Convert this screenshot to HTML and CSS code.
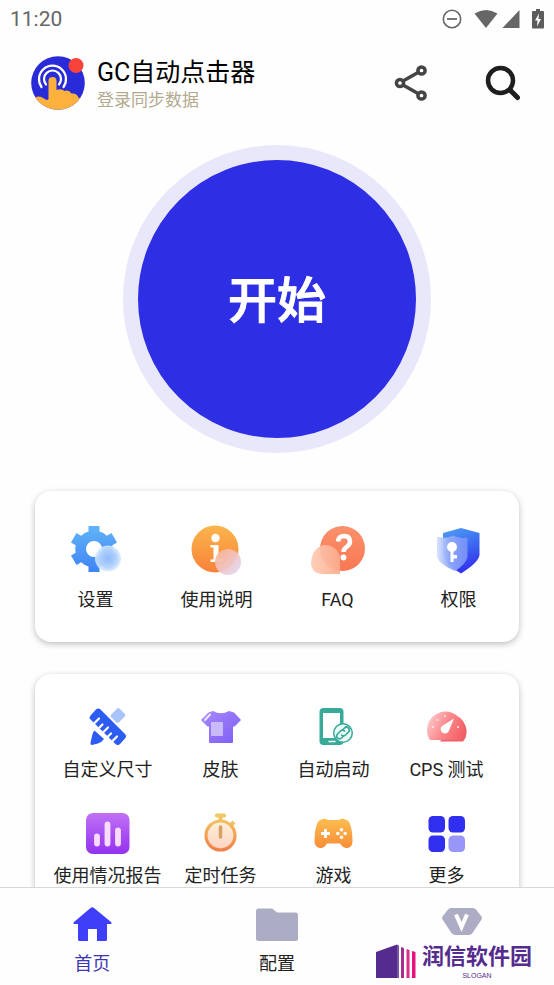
FILE: index.html
```
<!DOCTYPE html>
<html lang="zh-CN">
<head>
    <meta charset="UTF-8">
    <meta name="viewport" content="width=device-width, initial-scale=1.0">
    <title>GC自动点击器</title>
    <link rel="stylesheet" href="styles.css">
</head>
<body>
    <div class="status-bar">
        <span class="time">11:20</span>
        <div class="status-icons">
            <svg width="20" height="20" viewBox="0 0 20 20"><circle cx="10" cy="10" r="8.7" fill="none" stroke="#666" stroke-width="1.6"/><path d="M5 10h10" stroke="#666" stroke-width="1.8"/></svg>
            <svg class="wifi" width="24" height="20" viewBox="0 0 24 20"><path d="M0.5 4.5Q12 -2.500 23.500 4.500L12 19Z" fill="#666"/></svg>
            <svg class="signal" width="18" height="20" viewBox="0 0 18 20"><path d="M17.500 1v18H0.500Z" fill="#666"/></svg>
            <svg class="battery" width="12" height="20" viewBox="0 0 12 20"><path d="M4 0h4v2h3a1 1 0 0 1 1 1v15.500a1 1 0 0 1-1 1H1a1 1 0 0 1-1-1V3a1 1 0 0 1 1-1h3Z" fill="#5c5c5c"/><path d="M7 4.500L3 11.500h2.500L5 17.500l4-7.500H6.500Z" fill="#fff"/></svg>
        </div>
    </div>

    <main class="content">
        <header class="header">
            <svg class="avatar" width="54" height="54" viewBox="0 0 54 54">
                <defs><clipPath id="face"><circle cx="27" cy="27" r="26.800"/></clipPath></defs>
                <g clip-path="url(#face)">
                    <path d="M0 0h54v54H0Z" fill="#2a2bd8"/>
                    <g fill="none" stroke="#fff" stroke-width="2.200" stroke-linecap="round">
                        <path d="M10.500 31A13.500 13.500 0 1 1 32.500 31"/>
                        <path d="M15 28.500A8.500 8.500 0 1 1 28 28.500"/>
                    </g>
                    <path d="M0 44Q7 38 13 42.500Q16 45 17.500 43V25a4 4 0 0 1 8 0V34q5-2 8 1q4-2 7 2.500q6-.5 7 4.500Q52 41 54 44v12H0Z" fill="#fcb13c"/>
                </g>
                <circle cx="45" cy="9.500" r="7.500" fill="#f8433a"/>
            </svg>
            <div class="account">
                <h1>GC自动点击器</h1>
                <p>登录同步数据</p>
            </div>
            <button type="button" class="icon-button" aria-label="分享">
                <svg width="46" height="46" viewBox="0 0 46 46" fill="none" stroke="#444" stroke-width="3.500"><circle cx="12" cy="23" r="3.600"/><circle cx="33.500" cy="10.500" r="3.600"/><circle cx="33.500" cy="35.500" r="3.600"/><path d="M15 21l15-8.500M15 25l15 8.500"/></svg>
            </button>
            <button type="button" class="icon-button" aria-label="搜索">
                <svg width="46" height="46" viewBox="0 0 46 46" fill="none" stroke="#1e1e1e"><circle cx="20.500" cy="20.500" r="12.500" stroke-width="4.500"/><path d="M30 30l7.500 7.500" stroke-width="5" stroke-linecap="round"/></svg>
            </button>
        </header>

        <button type="button" class="start">开始</button>

        <section class="card card-main">
            <a href="#" class="tile">
                <svg width="56" height="56" viewBox="0 0 56 56">
                    <defs>
                        <linearGradient id="gear" x1="0" y1="5" x2="0" y2="51" gradientUnits="userSpaceOnUse"><stop offset="0" stop-color="#60b4f8"/><stop offset="1" stop-color="#3f83f4"/></linearGradient>
                        <radialGradient id="gearDrop"><stop offset="0" stop-color="#8fbcfb"/><stop offset=".7" stop-color="#b5d4fd" stop-opacity=".96"/><stop offset="1" stop-color="#d9ebff" stop-opacity=".85"/></radialGradient>
                    </defs>
                    <path d="M20.500 5h11v5.500q4 1 7.300 4.200l4.700-2.700 5.500 9.500-4.700 2.800q1 3.700 0 7.400l4.700 2.800-5.500 9.500-4.700-2.700q-3.300 3.200-7.300 4.200V51h-11v-5.500q-4-1-7.300-4.200L8.500 44 3 34.500l4.700-2.800q-1-3.700 0-7.400L3 21.500 8.500 12l4.700 2.700q3.300-3.200 7.300-4.200ZM26 20a8 8 0 1 0 0 16a8 8 0 0 0 0-16Z" fill="url(#gear)" fill-rule="evenodd"/>
                    <circle cx="40" cy="37.500" r="13" fill="url(#gearDrop)"/>
                </svg>
                <span>设置</span>
            </a>
            <a href="#" class="tile">
                <svg width="56" height="56" viewBox="0 0 56 56">
                    <defs>
                        <linearGradient id="info" x1="0" y1="0" x2="0" y2="1"><stop offset="0" stop-color="#fbb54b"/><stop offset="1" stop-color="#f9813a"/></linearGradient>
                        <linearGradient id="infoDrop" x1="0" y1="0" x2="1" y2="1"><stop offset="0" stop-color="#fbb08a"/><stop offset=".5" stop-color="#f0c5c5"/><stop offset="1" stop-color="#dfd8fb"/></linearGradient>
                    </defs>
                    <circle cx="26" cy="28" r="23.500" fill="url(#info)"/>
                    <circle cx="26.500" cy="17" r="4.200" fill="#fff"/>
                    <path d="M21.500 24h8v14.500h3V41h-11v-2.500h3v-12h-3Z" fill="#fff"/>
                    <circle cx="39" cy="41" r="13" fill="url(#infoDrop)" opacity=".93"/>
                </svg>
                <span>使用说明</span>
            </a>
            <a href="#" class="tile">
                <svg width="56" height="56" viewBox="0 0 56 56">
                    <defs>
                        <linearGradient id="faq" x1="0" y1="0" x2="0" y2="1"><stop offset="0" stop-color="#fa916c"/><stop offset="1" stop-color="#f87852"/></linearGradient>
                        <linearGradient id="faqDrop" x1="0" y1="0" x2="1" y2="0"><stop offset="0" stop-color="#fdcbb5"/><stop offset="1" stop-color="#fcaa8c"/></linearGradient>
                    </defs>
                    <circle cx="32.500" cy="27.500" r="22.500" fill="url(#faq)"/>
                    <path d="M14 24Q25 23 30 35V53H12Q1 52 1 42Q2 27 14 24Z" fill="url(#faqDrop)" opacity=".93"/>
                    <path d="M28 20.500q.5-5.500 6-5.500q6 .2 6 5.500q0 3-3.500 5.500q-3 2-3 5" fill="none" stroke="#fff" stroke-width="4.500"/>
                    <circle cx="33.500" cy="36.500" r="2.900" fill="#fff"/>
                </svg>
                <span>FAQ</span>
            </a>
            <a href="#" class="tile">
                <svg width="56" height="56" viewBox="0 0 56 56">
                    <defs>
                        <linearGradient id="shield" x1="0" y1="0" x2=".3" y2="1"><stop offset="0" stop-color="#4ea2f4"/><stop offset=".6" stop-color="#3b62f0"/><stop offset="1" stop-color="#3535ee"/></linearGradient>
                        <linearGradient id="shieldFront" x1="0" y1="0" x2="1" y2="0"><stop offset="0" stop-color="#d7e1ff"/><stop offset=".4" stop-color="#92aafa"/><stop offset="1" stop-color="#7690f6"/></linearGradient>
                    </defs>
                    <path d="M30 7l18.500 5v22Q48 41 30 52.500Q13 42 12 34V12Z" fill="url(#shield)"/>
                    <path d="M8 16Q15 18 22 14.500Q29 18 36.500 16.500V36Q35 43 24 50Q8 43 6 36V16Z" fill="url(#shieldFront)" opacity=".95"/>
                    <circle cx="21" cy="26" r="5" fill="#fff"/>
                    <path d="M19.500 29h3v5h3.500v3.500h-3.500V41h-3Z" fill="#fff"/>
                </svg>
                <span>权限</span>
            </a>
        </section>

        <section class="card card-tools">
            <a href="#" class="tile">
                <svg width="44" height="44" viewBox="0 0 44 44">
                    <rect x="26.500" y="4.500" width="11" height="12" rx="2" transform="rotate(45 32 10.500)" fill="#a9c3fb"/>
                    <path d="M8.500 25.500L18 34q-2 3-6 4.500l-6 1.500q-2 0-1.500-2L6 31q1-4 2.500-5.500Z" fill="#2d5cf0"/>
                    <path d="M10 4.500a3 3 0 0 1 4.500 0L39 29a3 3 0 0 1 0 4.500l-5 5.500a3 3 0 0 1-4.500 0L4.500 14.500a3 3 0 0 1 0-4Z" fill="#2d5cf0"/>
                    <path d="M8.500 18l4.500-4.500M13.500 22.500l3-3M17.500 27l4.500-4.500M22 31.500l3-3M26.500 36l4.500-4.500" stroke="#fff" stroke-width="2.200" stroke-linecap="round"/>
                </svg>
                <span>自定义尺寸</span>
            </a>
            <a href="#" class="tile">
                <svg width="44" height="44" viewBox="0 0 44 44">
                    <defs><linearGradient id="shirt" x1="0" y1="0" x2="1" y2="1"><stop offset="0" stop-color="#a78afb"/><stop offset="1" stop-color="#7d5cf4"/></linearGradient></defs>
                    <path d="M14 6q8 4.500 16 0l5 1.500L42 15l-6.500 6.500H34V37q0 1-1 1H11q-1 0-1-1V21.500H8.500L2 15 9.500 7.500Z" fill="url(#shirt)"/>
                    <path d="M6 15l5-5.500" stroke="#eee7ff" stroke-width="2" stroke-linecap="round"/>
                    <rect x="12" y="17" width="12" height="14" rx="1" fill="#c9bafc"/>
                </svg>
                <span>皮肤</span>
            </a>
            <a href="#" class="tile">
                <svg width="44" height="44" viewBox="0 0 44 44">
                    <rect x="7.500" y="3" width="24" height="37" rx="4" fill="#37aa99"/>
                    <rect x="11" y="8" width="17" height="25" fill="#fff"/>
                    <path d="M16.500 36.500h7" stroke="#fff" stroke-width="1.500"/>
                    <circle cx="31" cy="28" r="9.300" fill="#eafaf7" stroke="#37aa99" stroke-width="1.500"/>
                    <g fill="none" stroke="#37aa99" stroke-width="1.700" stroke-linecap="round"><path d="M30.500 25l2-2a2.800 2.800 0 0 1 4 4l-3 3a2.800 2.800 0 0 1-4 0"/><path d="M31.500 31l-2 2a2.800 2.800 0 0 1-4-4l3-3a2.800 2.800 0 0 1 4 0"/></g>
                </svg>
                <span>自动启动</span>
            </a>
            <a href="#" class="tile">
                <svg width="44" height="44" viewBox="0 0 44 44">
                    <defs><linearGradient id="gauge" x1="0" y1=".3" x2="1" y2=".7"><stop offset="0" stop-color="#fdc9c9"/><stop offset=".5" stop-color="#fa888b"/><stop offset="1" stop-color="#f46166"/></linearGradient></defs>
                    <path d="M15 36.500h23q4-4 3.500-12Q40 17 34 12Z" fill="#ee6067"/>
                    <path d="M5 35Q2 31 2 25A18.500 18.500 0 0 1 39 25Q39 31 35.500 35Z" fill="url(#gauge)"/>
                    <path d="M29 13.500L24 25.500a4.300 4.300 0 1 1-7-4.500Z" fill="#fff"/>
                    <g fill="#fee"><circle cx="8" cy="22" r="1"/><circle cx="12.500" cy="15" r="1"/><circle cx="20" cy="11" r="1"/><circle cx="33" cy="22" r="1"/></g>
                </svg>
                <span>CPS 测试</span>
            </a>
            <a href="#" class="tile">
                <svg width="44" height="44" viewBox="0 0 44 44">
                    <defs><linearGradient id="report" x1="0" y1="0" x2="0" y2="1"><stop offset="0" stop-color="#c070f7"/><stop offset="1" stop-color="#9332ee"/></linearGradient></defs>
                    <rect x="0" y="2" width="43.500" height="41" rx="7" fill="url(#report)"/>
                    <path d="M11 25.500v7M21.500 13.500v19M32 19.500v13" stroke="#f8dcff" stroke-width="5.800" stroke-linecap="round"/>
                </svg>
                <span>使用情况报告</span>
            </a>
            <a href="#" class="tile">
                <svg width="44" height="44" viewBox="0 0 44 44">
                    <defs><linearGradient id="timer" x1="0" y1="0" x2="0" y2="1"><stop offset="0" stop-color="#f4bf60"/><stop offset="1" stop-color="#ef8248"/></linearGradient><linearGradient id="dial" x1="0" y1="0" x2="0" y2="1"><stop offset="0" stop-color="#fff0da"/><stop offset="1" stop-color="#fcd3c1"/></linearGradient></defs>
                    <rect x="16" y="2.500" width="11" height="4" rx="1.500" fill="#f0c765"/>
                    <path d="M21.500 6v4M32 14l3-3" stroke="#f0c265" stroke-width="4"/>
                    <circle cx="21.500" cy="24.500" r="14.500" fill="url(#dial)" stroke="url(#timer)" stroke-width="3.200"/>
                    <path d="M21.500 16v10" stroke="#d6a163" stroke-width="3.500" stroke-linecap="round"/>
                </svg>
                <span>定时任务</span>
            </a>
            <a href="#" class="tile">
                <svg width="44" height="44" viewBox="0 0 44 44">
                    <defs><linearGradient id="pad" x1="0" y1="0" x2="0" y2="1"><stop offset="0" stop-color="#fcbd50"/><stop offset="1" stop-color="#f78d37"/></linearGradient></defs>
                    <path d="M11 8q3-1 5 1h11q2-2 5-1q5 1 6 5q2.500 7 2.500 17q0 6-5 7q-4 .5-7.500-4.500h-13Q12 37.500 8 37q-5.500-1-5.500-7Q2.500 20 5 13q1-4 6-5Z" fill="url(#pad)"/>
                    <path d="M13.500 18v9M9 22.500h9" stroke="#fff" stroke-width="2.800"/>
                    <g fill="#fff"><circle cx="29.500" cy="18.800" r="1.800"/><circle cx="29.500" cy="26.200" r="1.800"/><circle cx="25.800" cy="22.500" r="1.800"/><circle cx="33.200" cy="22.500" r="1.800"/></g>
                </svg>
                <span>游戏</span>
            </a>
            <a href="#" class="tile">
                <svg width="44" height="44" viewBox="0 0 44 44" fill="#302fef"><rect x="3.500" y="5" width="16.500" height="16.500" rx="4.500"/><rect x="23.500" y="5" width="16.500" height="16.500" rx="4.500"/><rect x="3.500" y="24.500" width="16.500" height="16.500" rx="4.500"/><rect x="23.500" y="24.500" width="16.500" height="16.500" rx="4.500" fill="#9996fa"/></svg>
                <span>更多</span>
            </a>
        </section>
    </main>

    <nav class="tab-bar">
        <a href="#" class="tab active">
            <svg width="44" height="40" viewBox="0 0 44 40"><path d="M20.500 3q1.700-1.500 3.500 0l17 14q1.500 1.800-.5 2H37v15.500q0 1.500-1.500 1.500H27V24h-9v12H9.500Q8 36 8 34.500V19H4.500q-2-.5-.5-2Z" fill="#3f3ffa"/></svg>
            <span>首页</span>
        </a>
        <a href="#" class="tab">
            <svg width="44" height="40" viewBox="0 0 44 40"><path d="M3.500 3.500H16q2 0 3.500 2L22 7.500h18.500q2.500 0 2.500 2.500v23.500q0 2.500-2.500 2.500h-37Q1 36 1 33.500V6q0-2.500 2.500-2.500Z" fill="#adacc5"/></svg>
            <span>配置</span>
        </a>
        <a href="#" class="tab" aria-label="VIP">
            <svg width="44" height="40" viewBox="0 0 44 40"><path d="M11 3h22q2 0 3 1.500l5.500 7q1 1.500 0 3L32.500 28q-1.500 2-3.500 2H15.500q-2.500 0-4-2L2.500 14.500q-1-1.500 0-3l5.500-7Q9 3 11 3Z" fill="#adacc5"/><path d="M16 9.500L21.500 22 27 9.500" fill="none" stroke="#fff" stroke-width="4"/></svg>
        </a>
        <div class="brand">
            <svg width="42" height="36" viewBox="0 0 42 36"><path d="M1 9L22 1.500V35H1Z" fill="#552b8e"/><path d="M22 1.500l2 1V35h-2Z" fill="#7b52a8"/><path d="M26 4l3 1v30h-3Z" fill="#a3308f"/><path d="M31.500 6l3 1v28h-3Z" fill="#d72d8c"/><path d="M37 8l3.500 1v26H37Z" fill="#e5127d"/></svg>
            <div class="brand-text">
                <strong>润信软件园</strong>
                <small>SLOGAN</small>
            </div>
        </div>
    </nav>
</body>
</html>
```

FILE: styles.css
```
* {
    box-sizing: border-box;
}

body {
    display: flex;
    flex-direction: column;
    height: 100vh;
    margin: 0;
    background: #fefefe;
    color: #222;
    font-family: Roboto, "Noto Sans CJK SC", sans-serif;
    font-size: 18px;
    line-height: 24px;
}

a {
    color: inherit;
    text-decoration: none;
}

button {
    padding: 0;
    border: none;
    background: none;
    font-family: inherit;
    cursor: pointer;
}

svg {
    display: block;
    flex: none;
}

/* Status bar */
.status-bar {
    display: flex;
    flex: none;
    align-items: center;
    justify-content: space-between;
    height: 38px;
    padding: 0 10px;
    color: #666;
}

.time {
    font-size: 21px;
}

.status-icons {
    display: flex;
    align-items: center;
}

.wifi {
    margin-left: 12px;
}

.signal {
    margin-left: 4px;
}

.battery {
    margin-left: 12px;
}

/* Scrolling content */
.content {
    flex: 1;
    min-height: 0;
    overflow-y: auto;
    scrollbar-width: none;
}

.header {
    display: flex;
    align-items: center;
    height: 90px;
    padding: 0 28px 0 31px;
}

.account {
    flex: 1;
    margin-left: 12px;
    padding-top: 6px;
}

.account h1 {
    margin: 0;
    color: #000;
    font-size: 25px;
    font-weight: 400;
    line-height: 28px;
}

.account p {
    margin: 0;
    color: #b3aa8e;
    font-size: 17px;
    line-height: 26px;
}

.icon-button + .icon-button {
    margin-left: 46px;
}

.start {
    display: block;
    width: 308px;
    height: 308px;
    margin: 17px auto 38px;
    padding-bottom: 6px;
    border: 15px solid #e9e8fb;
    border-radius: 50%;
    background: #2e2ee5;
    color: #fff;
    font-size: 49px;
    font-weight: 500;
    -webkit-text-stroke: 1px #fff;
}

/* Cards */
.card {
    display: grid;
    grid-template-columns: repeat(4, 1fr);
    margin: 0 35px 32px;
    border-radius: 16px;
    background: #fff;
    box-shadow: 0 2px 6px rgba(0, 0, 0, 0.26);
}

.card-main {
    padding: 30px 0;
}

.card-tools {
    row-gap: 29px;
    padding: 31px 16px;
}

.tile {
    display: flex;
    flex-direction: column;
    align-items: center;
    gap: 9px;
    white-space: nowrap;
}

.card-main .tile {
    gap: 11px;
}

/* Bottom tabs */
.tab-bar {
    position: relative;
    display: grid;
    flex: none;
    grid-template-columns: repeat(3, 1fr);
    height: 98px;
    padding-top: 17px;
    border-top: 1px solid #d8d8d8;
    background: #fefefe;
}

.tab {
    display: flex;
    flex-direction: column;
    align-items: center;
    gap: 7px;
}

.tab.active {
    color: #3c35b5;
}

.brand {
    position: absolute;
    right: 22px;
    bottom: 4px;
    display: flex;
    align-items: center;
    gap: 5px;
    color: #552b8e;
}

.brand-text {
    display: flex;
    flex-direction: column;
    align-items: center;
    gap: 3px;
}

.brand-text strong {
    font-family: "Noto Sans CJK SC", sans-serif;
    font-size: 22px;
    line-height: 28px;
}

.brand-text small {
    font-family: "Liberation Sans", sans-serif;
    font-size: 7px;
    line-height: 10px;
}
```
